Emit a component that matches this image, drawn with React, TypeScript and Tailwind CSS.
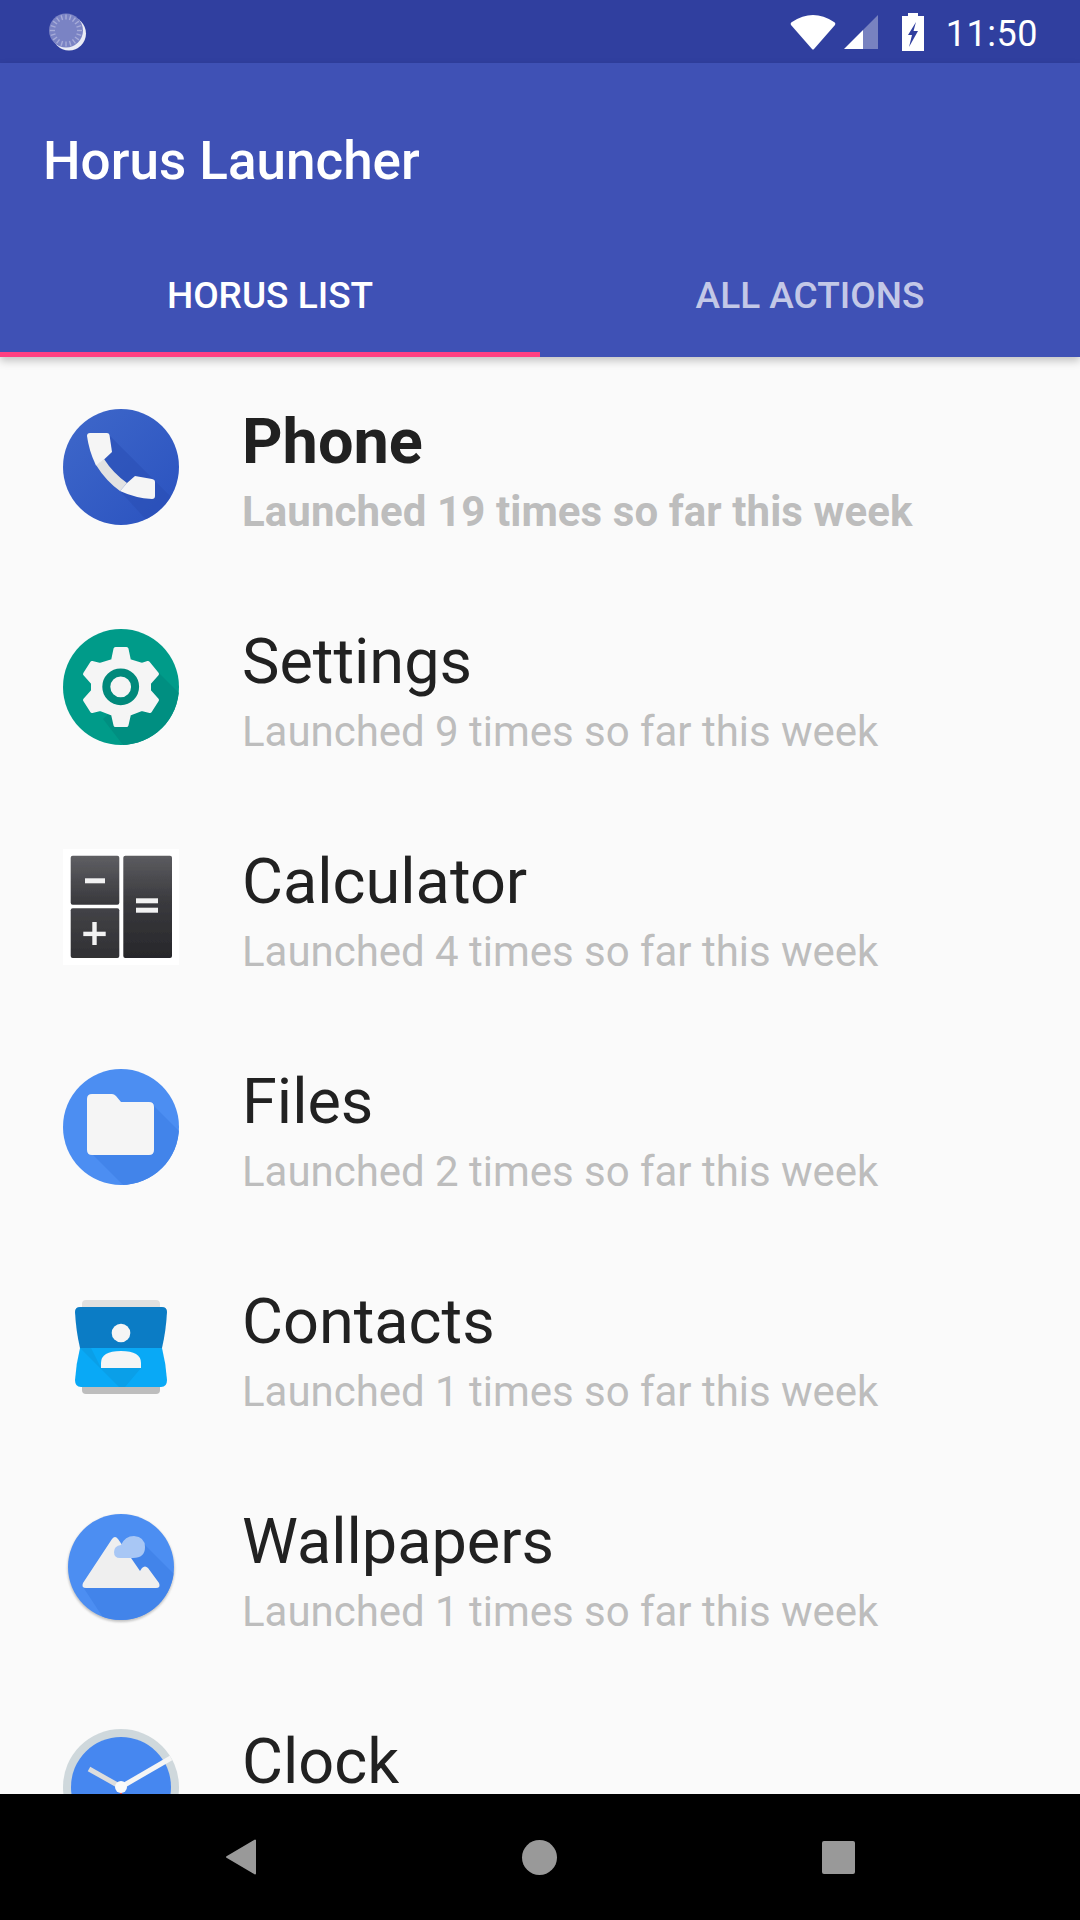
import React from 'react'

const font = { fontFamily: 'Roboto, sans-serif' }

const PhoneIcon = () => (
    <svg width="116" height="116" viewBox="0 0 116 116">
        <defs>
            <clipPath id="phoneClip"><circle cx="58" cy="58" r="58" /></clipPath>
            <linearGradient id="phoneBg" x1="0" y1="0" x2="1" y2="1">
                <stop offset="0" stopColor="#3f68ca" />
                <stop offset="1" stopColor="#2a52bf" />
            </linearGradient>
        </defs>
        <circle cx="58" cy="58" r="58" fill="url(#phoneBg)" />
        <g clipPath="url(#phoneClip)">
            <path d="M46 26 L116 96 L116 116 L88 116 L57 82 L40 52 Z" fill="#2a4fb5" opacity="0.55" />
        </g>
        <path d="M33 56 L41 50 Q50 64 64 74 L57 82 Q43 72 33 56 Z" fill="#e2e2e2" />
        <path d="M24 27 Q24 24 27 24 L44 24 Q46 24 46.5 26 L49 43 L41 50.5 L33 56.5 Q26 42 24 27 Z" fill="#f5f5f5" />
        <path d="M64 74 L72 67 L89 70 Q92 70.5 92 73 L92 87 Q92 90 89 90 Q72 89 57 82 Z" fill="#f5f5f5" />
    </svg>
)

const SettingsIcon = () => (
    <svg width="116" height="116" viewBox="0 0 116 116">
        <defs>
            <clipPath id="settingsClip"><circle cx="58" cy="58" r="58" /></clipPath>
        </defs>
        <circle cx="58" cy="58" r="58" fill="#009b89" />
        <path d="M92 40 L116 64 L112 116 L60 116 L40 90 Z" fill="#008f81" clipPath="url(#settingsClip)" />
        <path
            d="M52.5 20 L63.5 20 L66 32 L79 36 L85 34 L94 45 L86 54 L86 62 L94 71 L87 82 L79 80 L66 85 L63.5 96 L52.5 96 L50 85 L37 80 L29 82 L22 71 L30 62 L30 54 L22 45 L29 34 L37 36 L50 32 Z"
            fill="#f5f5f5"
            stroke="#f5f5f5"
            strokeWidth="4"
            strokeLinejoin="round"
        />
        <circle cx="57.7" cy="57.8" r="14.4" fill="#f5f5f5" stroke="#00897b" strokeWidth="8" />
    </svg>
)

const CalculatorIcon = () => (
    <svg width="116" height="116" viewBox="0 0 116 116">
        <defs>
            <linearGradient id="calcA" x1="0" y1="0" x2="0" y2="1">
                <stop offset="0" stopColor="#5f5f63" />
                <stop offset="1" stopColor="#38383c" />
            </linearGradient>
            <linearGradient id="calcB" x1="0" y1="0" x2="0" y2="1">
                <stop offset="0" stopColor="#434347" />
                <stop offset="1" stopColor="#303033" />
            </linearGradient>
            <linearGradient id="calcC" x1="0" y1="0" x2="0" y2="1">
                <stop offset="0" stopColor="#5c5c60" />
                <stop offset="0.45" stopColor="#3a3a3e" />
                <stop offset="1" stopColor="#27272a" />
            </linearGradient>
            <filter id="calcSoft"><feGaussianBlur stdDeviation="0.5" /></filter>
        </defs>
        <rect width="116" height="116" fill="#ffffff" />
        <g filter="url(#calcSoft)">
            <rect x="7.7" y="6.7" width="48.6" height="49" rx="2" fill="url(#calcA)" />
            <rect x="7.7" y="59.3" width="48.6" height="49.7" rx="2" fill="url(#calcB)" />
            <rect x="60.3" y="6.7" width="48.7" height="102.3" rx="2" fill="url(#calcC)" />
            <rect x="22" y="29.3" width="20" height="5" fill="#f2f2f2" />
            <rect x="20.3" y="82.7" width="22.4" height="4.4" fill="#f2f2f2" />
            <rect x="29.3" y="73" width="4.4" height="23" fill="#f2f2f2" />
            <rect x="73" y="49.3" width="22" height="5" fill="#f2f2f2" />
            <rect x="73" y="58.7" width="22" height="5" fill="#f2f2f2" />
        </g>
    </svg>
)

const FilesIcon = () => (
    <svg width="116" height="116" viewBox="0 0 116 116">
        <defs>
            <clipPath id="filesClip"><circle cx="58" cy="58" r="58" /></clipPath>
        </defs>
        <circle cx="58" cy="58" r="58" fill="#4c8ef2" />
        <path d="M88 34 L116 62 L112 116 L60 116 L26 82 Z" fill="#4284ea" clipPath="url(#filesClip)" />
        <path d="M29 25 Q24 25 24 30 L24 81 Q24 86 29 86 L86 86 Q91 86 91 81 L91 38 Q91 33 86 33 L58 33 L53 27 Q51 25 49 25 Z" fill="#f5f5f5" />
    </svg>
)

const ContactsIcon = () => (
    <svg width="116" height="116" viewBox="0 0 116 116">
        <defs>
            <filter id="contactSoft"><feGaussianBlur stdDeviation="0.6" /></filter>
        </defs>
        <g filter="url(#contactSoft)">
            <path d="M19 85 L97 85 L97 101 Q97 105 93 105 L23 105 Q19 105 19 101 Z" fill="#bdbdbd" />
            <path d="M23 11 L93 11 Q97 11 97 15 L97 22 L19 22 L19 15 Q19 11 23 11 Z" fill="#e0e0e0" />
        </g>
        <path d="M12 23 Q12 18 17 18 L99 18 Q104 18 104 23 Q103 42 99 59 L17 59 Q13 42 12 23 Z" fill="#0b7cc5" />
        <path d="M17 59 L99 59 Q103 75 104 91 Q104 98 98 98 L18 98 Q12 98 12 91 Q13 75 17 59 Z" fill="#09a9f6" />
        <path d="M17 59 L28 59 L38 79 L78 79 L62 98 L56 98 Z" fill="#0a9fe8" />
        <circle cx="58" cy="44" r="9.3" fill="#f5f5f5" />
        <path d="M38 79 L38 74 Q38 62 58 62 Q78 62 78 74 L78 79 Z" fill="#f5f5f5" />
    </svg>
)

const WallpapersIcon = () => (
    <svg width="116" height="116" viewBox="0 0 116 116">
        <defs>
            <clipPath id="wallClip"><circle cx="58" cy="58" r="53" /></clipPath>
            <filter id="wallSoft"><feGaussianBlur stdDeviation="1.2" /></filter>
        </defs>
        <circle cx="58" cy="59.5" r="53.5" fill="#9e9e9e" opacity="0.6" filter="url(#wallSoft)" />
        <circle cx="58" cy="58" r="53" fill="#4c8ef2" />
        <path d="M80 34 L116 70 L116 116 L45 116 L20 78 Z" fill="#4284ea" clipPath="url(#wallClip)" />
        <path d="M49 30 Q52 26 55 30 L77 62 L79 59 Q82 56 85 59 L96 74 Q98 79 93 79 L23 79 Q18 79 20 74 Z" fill="#efefef" />
        <path d="M57 49 Q51 49 51 43 Q51 37 58 36 Q62 27 71 27 Q82 28 82 38 Q82 49 70 49 Z" fill="#a8c7f5" />
    </svg>
)

const ClockIcon = () => (
    <svg width="116" height="116" viewBox="0 0 116 116">
        <circle cx="58" cy="58" r="58" fill="#cfd8dc" />
        <circle cx="58" cy="58" r="50" fill="#4687f0" />
        <path d="M58 58 L26 40" stroke="#dddddd" strokeWidth="5" />
        <path d="M58 58 L108 29" stroke="#f5f5f5" strokeWidth="5" />
        <rect x="57" y="58" width="2" height="20" fill="#ef5350" />
        <circle cx="58" cy="58" r="6" fill="#fafafa" />
    </svg>
)

const ticks = Array.from({ length: 20 }, (_, i) => i * 18)

const apps = [
    { name: 'Phone', count: 19, icon: <PhoneIcon />, bold: true },
    { name: 'Settings', count: 9, icon: <SettingsIcon /> },
    { name: 'Calculator', count: 4, icon: <CalculatorIcon /> },
    { name: 'Files', count: 2, icon: <FilesIcon /> },
    { name: 'Contacts', count: 1, icon: <ContactsIcon /> },
    { name: 'Wallpapers', count: 1, icon: <WallpapersIcon /> },
    { name: 'Clock', count: 1, icon: <ClockIcon /> },
]

const AppRow = ({ name, count, icon, bold }: { name: string; count: number; icon: React.ReactNode; bold?: boolean }) => (
    <div className="flex h-[220px] shrink-0 items-start pl-[63px]">
        <div className="w-[116px] h-[116px] mt-[52px] shrink-0">{icon}</div>
        <div className="ml-[63px] pt-[50px]">
            <div className={`text-[63px] leading-[70px] text-[#212121] ${bold ? 'font-bold' : 'font-normal'}`}>{name}</div>
            <div className={`text-[42px] leading-[47px] mt-[11px] whitespace-nowrap text-[#bdbdbd] ${bold ? 'font-bold tracking-[0.07px]' : 'font-normal tracking-[-0.03px]'}`}>
                Launched {count} times so far this week
            </div>
        </div>
    </div>
)

export default function App() {
    return (
        <div className="w-[1080px] h-[1920px] flex flex-col overflow-hidden bg-[#fafafa]" style={font}>
            {/* Status bar */}
            <div className="h-[63px] shrink-0 bg-[#303f9f] flex items-center text-white pl-[49px] pr-[42px]">
                <svg width="40" height="40" viewBox="0 0 40 40">
                    <circle cx="20" cy="21.5" r="17" fill="#ffffff" opacity="0.9" />
                    <circle cx="17" cy="18.5" r="17" fill="#7a83c4" />
                    {ticks.map((deg) => (
                        <rect key={deg} x="16.3" y="2.5" width="1.4" height="5" fill="#a6abd8" transform={`rotate(${deg} 17 18.5)`} />
                    ))}
                </svg>
                <div className="ml-auto flex items-center">
                    <svg width="46" height="38" viewBox="0 0 46 38">
                        <path d="M2 9 Q23 -5 44 9 Q46 10 45 12 L24 36 Q23 37 22 36 L1 12 Q0 10 2 9 Z" fill="#ffffff" />
                    </svg>
                    <svg className="ml-[7px]" width="36" height="36" viewBox="0 0 36 36">
                        <path d="M35 1 L35 35 L20 35 L20 16 Z" fill="#ffffff" opacity="0.35" />
                        <path d="M20 16 L20 35 L1 35 Z" fill="#ffffff" />
                    </svg>
                    <svg className="ml-[23px]" width="22" height="38" viewBox="0 0 22 38">
                        <path d="M6 0 L16 0 L16 3 L22 3 L22 38 L0 38 L0 3 L6 3 Z" fill="#ffffff" />
                        <path d="M14 9 L6 22 L10 22 L7 34 L16 18 L11.5 18 Z" fill="#303f9f" />
                    </svg>
                    <div className="ml-[22px] mt-[4px] text-[36px] leading-[42px] tracking-[0.5px]">11:50</div>
                </div>
            </div>

            {/* App bar and tabs */}
            <div className="h-[294px] shrink-0 bg-[#3f51b5] flex flex-col shadow-[0_4px_8px_rgba(0,0,0,0.22)] z-10">
                <div className="h-[192px] shrink-0 flex items-center pt-[5px] pl-[43px] text-[53px] font-medium text-white">Horus Launcher</div>
                <div className="flex-1 grid grid-cols-2 text-[37px] font-medium">
                    <div className="flex items-center justify-center pb-[16px] border-b-[5px] border-[#ff4081] text-white">HORUS LIST</div>
                    <div className="flex items-center justify-center pb-[21px] text-white/70">ALL ACTIONS</div>
                </div>
            </div>

            {/* List */}
            <div className="flex-1 flex flex-col overflow-hidden">
                {apps.map((app) => (
                    <AppRow key={app.name} {...app} />
                ))}
            </div>

            {/* Nav bar */}
            <div className="h-[126px] shrink-0 bg-black flex items-center justify-between pl-[225px] pr-[225px]">
                <svg width="32" height="36" viewBox="0 0 32 36">
                    <path d="M30 1.5 L30 34.5 L2 18 Z" fill="#999999" stroke="#999999" strokeWidth="2" strokeLinejoin="round" />
                </svg>
                <div className="w-[35px] h-[35px] rounded-full bg-[#999999]" />
                <div className="w-[33px] h-[33px] rounded-[2px] bg-[#999999]" />
            </div>
        </div>
    )
}
